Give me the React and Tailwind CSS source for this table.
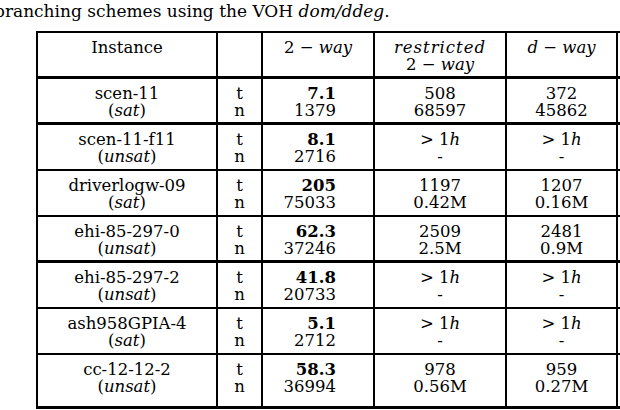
import React from 'react';

const rows = [
  { name: 'scen-11', kind: 'sat', t: '7.1', n: '1379', r: ['508', '68597'], d: ['372', '45862'], line: 'h-[46px] border-b-[3px]' },
  { name: 'scen-11-f11', kind: 'unsat', t: '8.1', n: '2716', r: null, d: null, line: 'h-[46px] border-b-2' },
  { name: 'driverlogw-09', kind: 'sat', t: '205', n: '75033', r: ['1197', '0.42M'], d: ['1207', '0.16M'], line: 'h-[46px] border-b-2' },
  { name: 'ehi-85-297-0', kind: 'unsat', t: '62.3', n: '37246', r: ['2509', '2.5M'], d: ['2481', '0.9M'], line: 'h-[46px] border-b-[3px]' },
  { name: 'ehi-85-297-2', kind: 'unsat', t: '41.8', n: '20733', r: null, d: null, line: 'h-[46px] border-b-2' },
  { name: 'ash958GPIA-4', kind: 'sat', t: '5.1', n: '2712', r: null, d: null, line: 'h-[46px] border-b-2' },
  { name: 'cc-12-12-2', kind: 'unsat', t: '58.3', n: '36994', r: ['978', '0.56M'], d: ['959', '0.27M'], line: 'h-[54px] border-b-[3px]' },
];

// "> 1h" cell used when a run timed out
const Timeout = () => (
  <>
    <span>&gt; 1<i>h</i></span>
    <span>-</span>
  </>
);

const Pair = ({ vals }) =>
  vals ? (
    <>
      <span>{vals[0]}</span>
      <span>{vals[1]}</span>
    </>
  ) : (
    <Timeout />
  );

const Row = ({ row }) => (
  <div className={`flex border-black ${row.line}`}>
    <div className="w-[180px] border-r-2 border-black flex flex-col items-center pt-[6px]">
      <span>{row.name}</span>
      <span>(<i>{row.kind}</i>)</span>
    </div>
    <div className="w-[45px] border-r-2 border-black flex flex-col items-center pt-[6px]">
      <span>t</span>
      <span>n</span>
    </div>
    <div className="w-[112px] border-r-2 border-black flex flex-col items-end pr-[37px] pt-[6px]">
      <span className="font-bold">{row.t}</span>
      <span>{row.n}</span>
    </div>
    <div className="w-[132px] border-r-2 border-black flex flex-col items-center pt-[6px]">
      <Pair vals={row.r} />
    </div>
    <div className="w-[111px] border-r-2 border-black flex flex-col items-center pt-[6px]">
      <Pair vals={row.d} />
    </div>
  </div>
);

export default function App() {
  return (
    <div className="w-[620px] h-[410px] overflow-hidden bg-white text-black font-['DejaVu_Serif',serif] text-[16.5px] leading-[17px]">
      <div className="ml-[-6px] pt-[3px] h-[31px] text-[17px] whitespace-nowrap">
        branching schemes using the VOH <i>dom/ddeg</i>.
      </div>
      <div className="ml-[36px] border-l-2 border-t-2 border-black">
        <div className="flex h-[46px] border-b-[3px] border-black">
          <div className="w-[180px] border-r-2 border-black flex justify-center pt-[6px]">Instance</div>
          <div className="w-[45px] border-r-2 border-black"></div>
          <div className="w-[112px] border-r-2 border-black flex justify-center pt-[6px]">
            <span>2 − <i>way</i></span>
          </div>
          <div className="w-[132px] border-r-2 border-black flex flex-col items-center pt-[6px]">
            <i className="tracking-[1px]">restricted</i>
            <span>2 − <i>way</i></span>
          </div>
          <div className="w-[111px] border-r-2 border-black flex justify-center pt-[6px]">
            <span><i>d</i> − <i>way</i></span>
          </div>
        </div>
        {rows.map((row) => (
          <Row key={row.name} row={row} />
        ))}
      </div>
    </div>
  );
}
